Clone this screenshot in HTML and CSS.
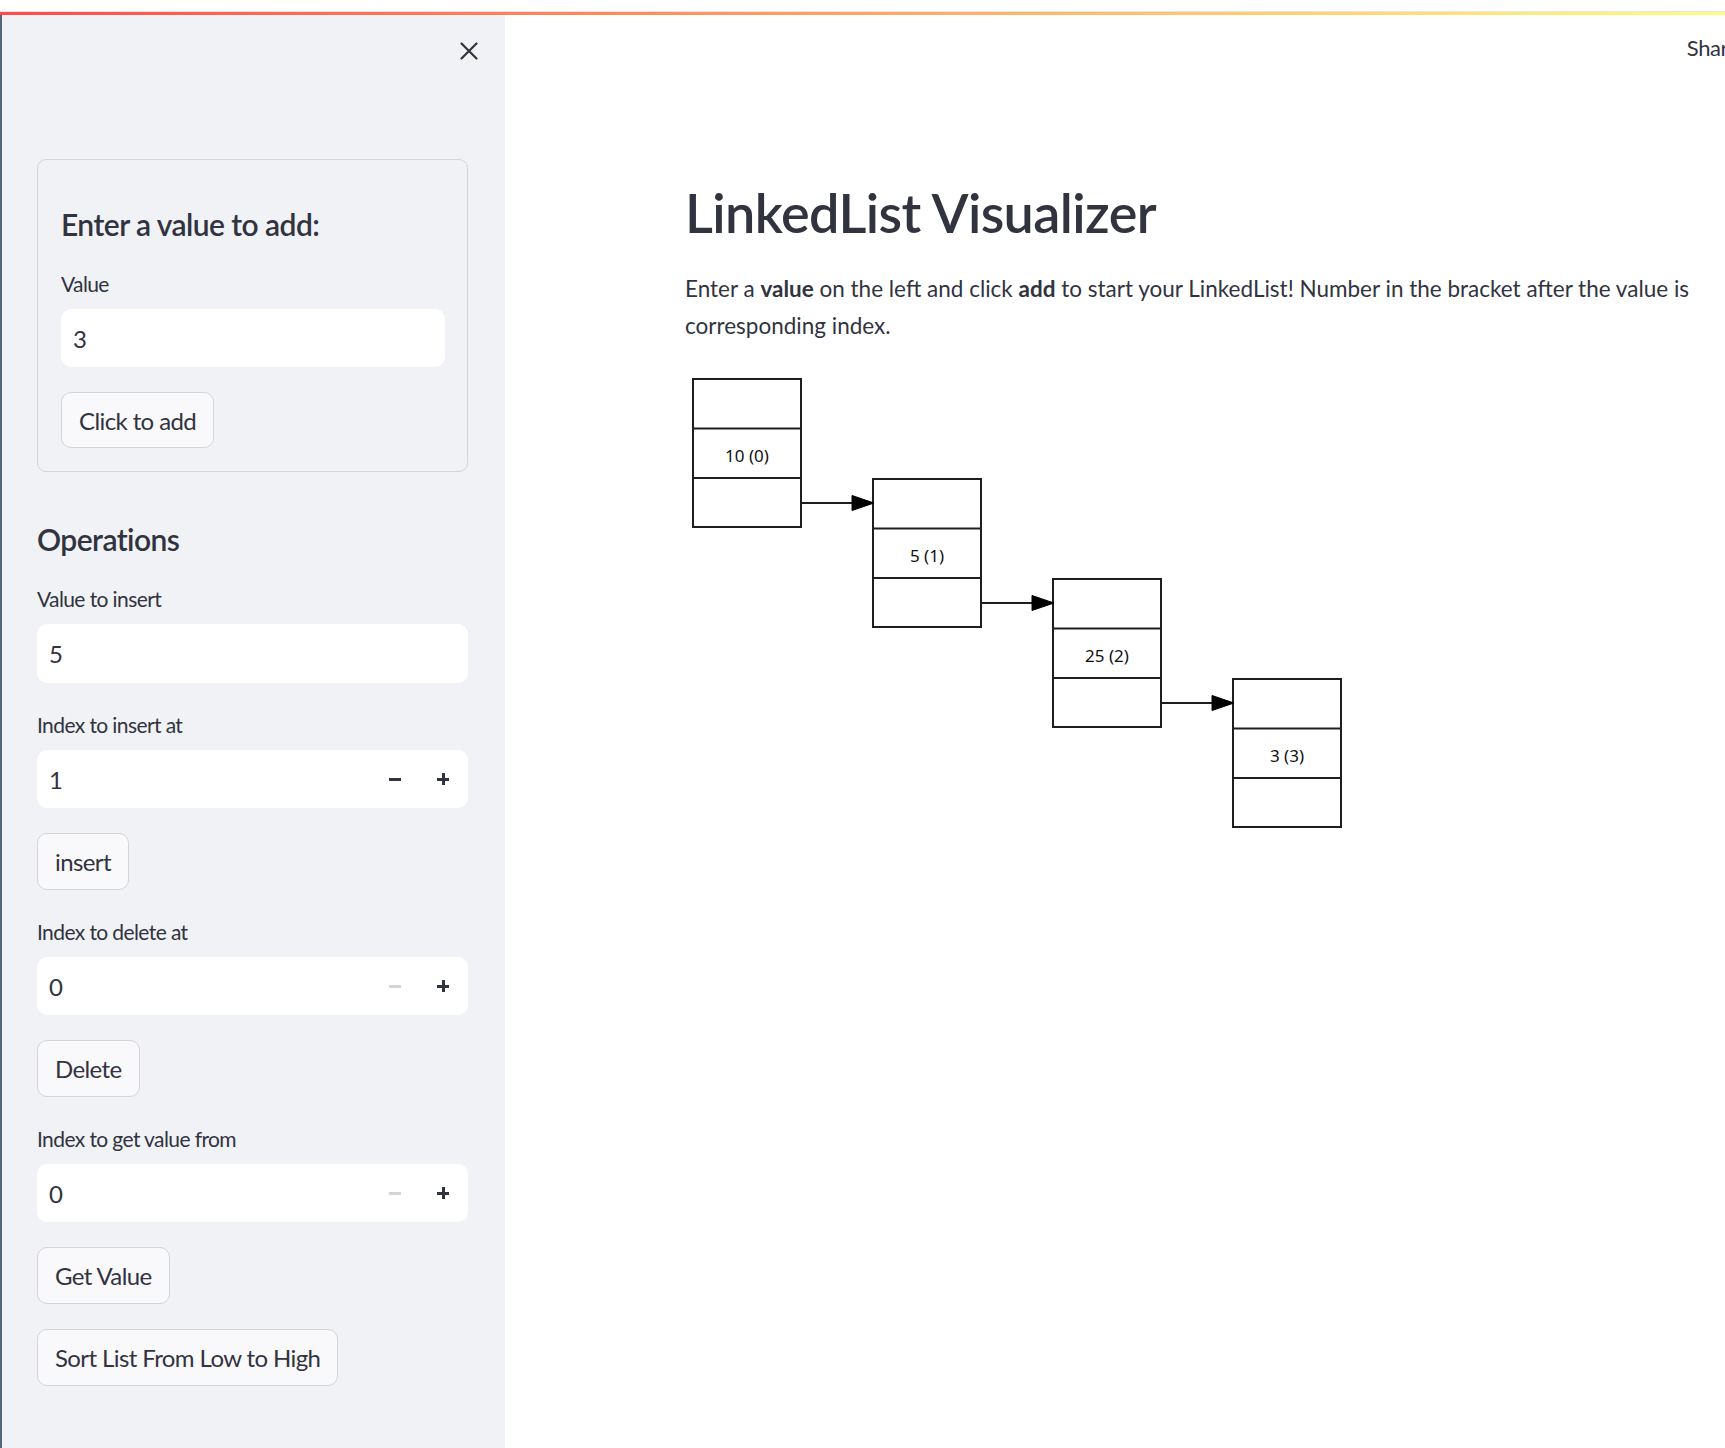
FILE: index.html
```html
<!DOCTYPE html>
<html lang="en">
<head>
<meta charset="utf-8">
<title>LinkedList Visualizer</title>
<link rel="stylesheet" href="styles.css">
</head>
<body>
<div class="topgap"></div>
<div class="decoration"></div>
<div class="app">
  <aside class="sidebar">
    <div class="sidebar-head">
      <button class="close" aria-label="Close sidebar">
        <svg width="18" height="18" viewBox="0 0 18 18"><path d="M1.5 1.5 L16.5 16.5 M16.5 1.5 L1.5 16.5" stroke="#31333f" stroke-width="2.2" stroke-linecap="round" fill="none"/></svg>
      </button>
    </div>
    <div class="stack">
      <form class="card stack">
        <h3 class="sub">Enter a value to add:</h3>
        <div class="field">
          <label class="lbl">Value</label>
          <div class="inp"><span>3</span></div>
        </div>
        <div><span class="btn btn-card">Click to add</span></div>
      </form>
      <h3 class="sub sub-ops">Operations</h3>
      <div class="field">
        <label class="lbl">Value to insert</label>
        <div class="inp"><span>5</span></div>
      </div>
      <div class="field">
        <label class="lbl">Index to insert at</label>
        <div class="inp num"><span class="numval">1</span><span class="step"><i class="minus"></i></span><span class="step"><i class="plus"></i></span></div>
      </div>
      <div><span class="btn">insert</span></div>
      <div class="field">
        <label class="lbl">Index to delete at</label>
        <div class="inp num"><span class="numval">0</span><span class="step off"><i class="minus"></i></span><span class="step"><i class="plus"></i></span></div>
      </div>
      <div><span class="btn">Delete</span></div>
      <div class="field">
        <label class="lbl">Index to get value from</label>
        <div class="inp num"><span class="numval">0</span><span class="step off"><i class="minus"></i></span><span class="step"><i class="plus"></i></span></div>
      </div>
      <div><span class="btn">Get Value</span></div>
      <div><span class="btn">Sort List From Low to High</span></div>
    </div>
  </aside>
  <main class="main">
    <header class="header"><span class="share">Share</span></header>
    <section class="content">
      <h1 class="title">LinkedList Visualizer</h1>
      <p class="intro">Enter a <b>value</b> on the left and click <b>add</b> to start your LinkedList! Number in the bracket after the value is corresponding index.</p>
      <svg class="graph" width="680" height="470" viewBox="0 0 680 470">
        <g transform="translate(-685,-370)" fill="none" stroke="#1e1e1e" stroke-width="2">
          <rect x="693" y="379" width="108" height="148"/>
          <line x1="693" y1="428.5" x2="801" y2="428.5"/>
          <line x1="693" y1="478" x2="801" y2="478"/>
          <rect x="873" y="479" width="108" height="148"/>
          <line x1="873" y1="528.5" x2="981" y2="528.5"/>
          <line x1="873" y1="578" x2="981" y2="578"/>
          <rect x="1053" y="579" width="108" height="148"/>
          <line x1="1053" y1="628.5" x2="1161" y2="628.5"/>
          <line x1="1053" y1="678" x2="1161" y2="678"/>
          <rect x="1233" y="679" width="108" height="148"/>
          <line x1="1233" y1="728.5" x2="1341" y2="728.5"/>
          <line x1="1233" y1="778" x2="1341" y2="778"/>
          <line x1="802" y1="503" x2="853" y2="503"/>
          <line x1="982" y1="603" x2="1033" y2="603"/>
          <line x1="1162" y1="703" x2="1213" y2="703"/>
        </g>
        <g transform="translate(-685,-370)" fill="#000" stroke="#000" stroke-width="1">
          <polygon points="852,495.5 874,503 852,510.5"/>
          <polygon points="1032,595.5 1054,603 1032,610.5"/>
          <polygon points="1212,695.5 1234,703 1212,710.5"/>
        </g>
        <g transform="translate(-685,-370)" class="gtext">
          <text x="747" y="462" text-anchor="middle">10 (0)</text>
          <text x="927" y="562" text-anchor="middle">5 (1)</text>
          <text x="1107" y="662" text-anchor="middle">25 (2)</text>
          <text x="1287" y="762" text-anchor="middle">3 (3)</text>
        </g>
      </svg>
    </section>
  </main>
</div>
</body>
</html>
```
FILE: styles.css
```css
html, body {
  margin: 0;
  padding: 0;
  overflow: hidden;
  background: #ffffff;
}
body {
  width: 1725px;
  height: 1448px;
  font-family: Lato, "Noto Sans", sans-serif;
  color: #31333f;
}
.topgap {
  height: 11px;
  background: #ffffff;
  border-bottom: 1px solid #e6e6e6;
}
.decoration {
  height: 3px;
  background: linear-gradient(90deg, rgb(255, 75, 75), rgb(255, 253, 128));
}
.app {
  display: flex;
  height: 1433px;
}
.sidebar {
  width: 431px;
  flex: none;
  background: #f0f2f6;
  border-left: 2px solid #55657b;
  padding: 0 37px 0 35px;
}
.sidebar-head {
  height: 144px;
  display: flex;
  justify-content: flex-end;
  align-items: flex-start;
}
.close {
  margin: 27px -10px 0 0;
  padding: 0;
  width: 18px;
  height: 18px;
  border: none;
  background: transparent;
  display: flex;
}
.stack {
  display: flex;
  flex-direction: column;
  gap: 25px;
}
.card {
  border: 1px solid #d3d5da;
  border-radius: 9px;
  padding: 24px 22px 23px 23px;
  margin: 0;
}
.sub {
  margin: 0;
  font-size: 30px;
  font-weight: 600;
  line-height: 36px;
  padding-top: 22px;
  letter-spacing: -0.55px;
}
.sub-ops {
  padding-top: 24px;
}
.field {
  display: flex;
  flex-direction: column;
}
.lbl {
  font-size: 21px;
  line-height: 34px;
  margin-bottom: 8px;
  letter-spacing: -0.6px;
}
.inp {
  height: 58px;
  background: #ffffff;
  border-radius: 10px;
  display: flex;
  align-items: center;
  padding-left: 12px;
  font-size: 24px;
}
.field .inp:not(.num) {
  height: 59px;
}
.card .inp:not(.num) {
  height: 58px;
}
.num {
  padding-right: 1px;
}
.numval {
  flex: 1;
}
.step {
  width: 48px;
  height: 100%;
  display: flex;
  align-items: center;
  justify-content: center;
}
.minus {
  display: block;
  width: 12px;
  height: 3px;
  background: #31333f;
}
.plus {
  display: block;
  width: 12px;
  height: 12px;
  background:
    linear-gradient(#31333f, #31333f) center / 12px 3px no-repeat,
    linear-gradient(#31333f, #31333f) center / 3px 12px no-repeat;
}
.step.off .minus {
  background: #d3d5da;
}
.btn {
  display: inline-flex;
  align-items: center;
  height: 57px;
  box-sizing: border-box;
  padding: 0 17px;
  background: #f9f9fb;
  border: 1px solid #d3d5da;
  border-radius: 10px;
  font-size: 24px;
  letter-spacing: -0.6px;
}
.btn-card {
  height: 56px;
}
.main {
  flex: 1;
  display: flex;
  flex-direction: column;
  padding-left: 180px;
  min-width: 0;
}
.header {
  height: 65px;
  display: flex;
  align-items: center;
  justify-content: flex-end;
}
.share {
  font-size: 22px;
  margin-right: -14px;
  white-space: nowrap;
  letter-spacing: -0.4px;
}
.content {
  padding-top: 100px;
  display: flex;
  flex-direction: column;
  align-items: flex-start;
}
.title {
  margin: 0;
  font-size: 54px;
  font-weight: 600;
  line-height: 65px;
  letter-spacing: -0.6px;
}
.intro {
  margin: 25px 0 0 0;
  font-size: 22.5px;
  line-height: 37px;
  width: 1038px;
}
.intro b {
  font-weight: 700;
}
.graph {
  display: block;
  margin-top: 26px;
}
.gtext text {
  font-family: "Noto Sans", sans-serif;
  font-size: 17px;
  fill: #111;
}
```
